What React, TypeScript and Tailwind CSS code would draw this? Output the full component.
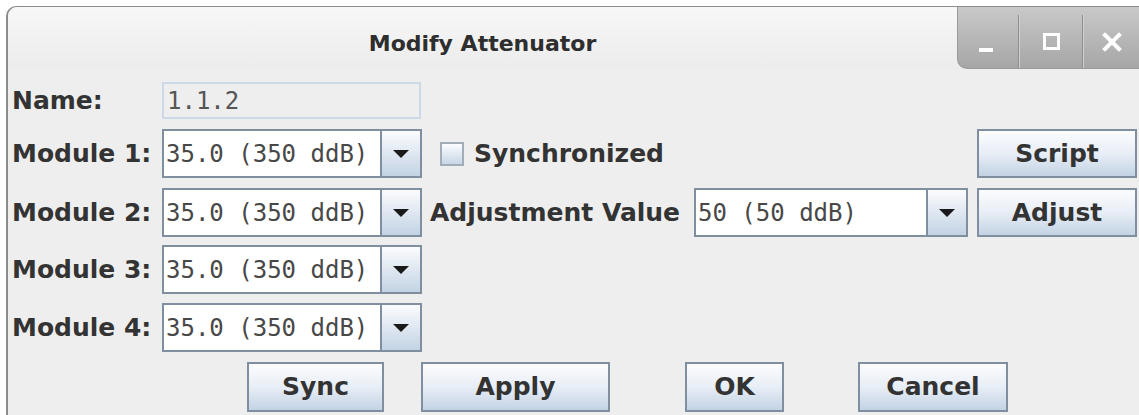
import React from "react";

const label = "font-['DejaVu_Sans',sans-serif] font-bold text-[25px] text-[#333333]";
const mono = "font-['DejaVu_Sans_Mono',monospace] text-[24px] text-[#484848]";

function Combo({ value, width }: { value: string; width: number }) {
  return (
    <div
      className="flex h-[49px] border-2 border-[#7f8fa0] bg-white"
      style={{ width }}
    >
      <div className={`flex flex-1 items-center pl-[2px] ${mono}`}>{value}</div>
      <div className="flex w-[40px] items-center justify-center border-l-2 border-[#7f8fa0] bg-gradient-to-b from-[#fbfcfe] to-[#c3d3e4]">
        <svg width="18" height="10" viewBox="0 0 18 10">
          <path d="M1 1 L17 1 L9 9 Z" fill="#1a1a1a" />
        </svg>
      </div>
    </div>
  );
}

function Button({ text, width, height = 50 }: { text: string; width: number; height?: number }) {
  return (
    <div
      className={`flex items-center justify-center border-2 border-[#7f8fa0] bg-gradient-to-b from-[#fbfcfe] via-[#e8eef6] to-[#c3d3e4] ${label}`}
      style={{ width, height }}
    >
      {text}
    </div>
  );
}

function RowLabel({ text }: { text: string }) {
  return <div className={`w-[154px] shrink-0 pl-[4px] ${label}`}>{text}</div>;
}

function TitleControls() {
  return (
    <div className="flex h-[62px] w-[182px] self-start overflow-hidden rounded-bl-[10px] border-b border-l border-[#9a9a9a] bg-gradient-to-b from-[#c9c9c9] to-[#a6a6a6] pt-[8px]">
      <div className="flex w-[61px] items-center justify-center border-r border-[#8e8e8e]">
        <div className="mt-[16px] mr-[4px] h-[4px] w-[14px] bg-white" />
      </div>
      <div className="flex w-[64px] items-center justify-center border-l border-r border-l-[#d0d0d0] border-r-[#8e8e8e]">
        <div className="h-[17px] w-[17px] border-[3px] border-white" />
      </div>
      <div className="flex flex-1 items-center justify-center border-l border-[#d0d0d0]">
        <svg width="20" height="20" viewBox="0 0 20 20">
          <path d="M3 3 L17 17 M17 3 L3 17" stroke="white" strokeWidth="4" strokeLinecap="square" />
        </svg>
      </div>
    </div>
  );
}

export default function App() {
  return (
    <div className="h-[415px] w-[1139px] overflow-hidden bg-white pl-[6px] pt-[6px]">
      <div className="flex h-[420px] w-[1133px] flex-col rounded-tl-[10px] border-l-2 border-t border-[#8c8c8c] bg-[#eeeeee]">
        {/* title bar */}
        <div className="flex h-[62px] shrink-0 rounded-tl-[10px] bg-gradient-to-b from-[#f7f7f7] to-[#ececec]">
          <div className="flex flex-1 items-center justify-center pt-[11px] font-['DejaVu_Sans',sans-serif] text-[22px] font-bold text-[#2e2e2e]">
            Modify Attenuator
          </div>
          <TitleControls />
        </div>

        {/* form */}
        <div className="mt-[13px] flex h-[37px] items-center">
          <RowLabel text="Name:" />
          <div className={`flex h-[37px] w-[259px] items-center border-2 border-[#cdd9e6] bg-[#eeeeee] pl-[3px] ${mono} text-[#555555]`}>
            1.1.2
          </div>
        </div>

        <div className="mt-[10px] flex h-[49px] items-center">
          <RowLabel text="Module 1:" />
          <Combo value="35.0 (350 ddB)" width={260} />
          <div className="ml-[18px] h-[24px] w-[24px] border-2 border-[#a3adb8] bg-gradient-to-b from-[#fbfcfe] to-[#c8d6e6]" />
          <div className={`ml-[10px] ${label}`}>Synchronized</div>
          <div className="ml-auto mr-[2px]">
            <Button text="Script" width={160} height={49} />
          </div>
        </div>

        <div className="mt-[10px] flex h-[49px] items-center">
          <RowLabel text="Module 2:" />
          <Combo value="35.0 (350 ddB)" width={260} />
          <div className={`ml-[8px] ${label}`}>Adjustment Value</div>
          <div className="ml-auto mr-[2px] flex items-center gap-[9px]">
            <Combo value="50 (50 ddB)" width={274} />
            <Button text="Adjust" width={160} height={49} />
          </div>
        </div>

        <div className="mt-[8px] flex h-[49px] items-center">
          <RowLabel text="Module 3:" />
          <Combo value="35.0 (350 ddB)" width={260} />
        </div>

        <div className="mt-[9px] flex h-[49px] items-center">
          <RowLabel text="Module 4:" />
          <Combo value="35.0 (350 ddB)" width={260} />
        </div>

        <div className="mt-[10px] flex h-[50px] items-center">
          <div className="ml-[239px]">
            <Button text="Sync" width={137} />
          </div>
          <div className="ml-[37px]">
            <Button text="Apply" width={189} />
          </div>
          <div className="ml-[75px]">
            <Button text="OK" width={99} />
          </div>
          <div className="ml-[74px]">
            <Button text="Cancel" width={150} />
          </div>
        </div>
      </div>
    </div>
  );
}
